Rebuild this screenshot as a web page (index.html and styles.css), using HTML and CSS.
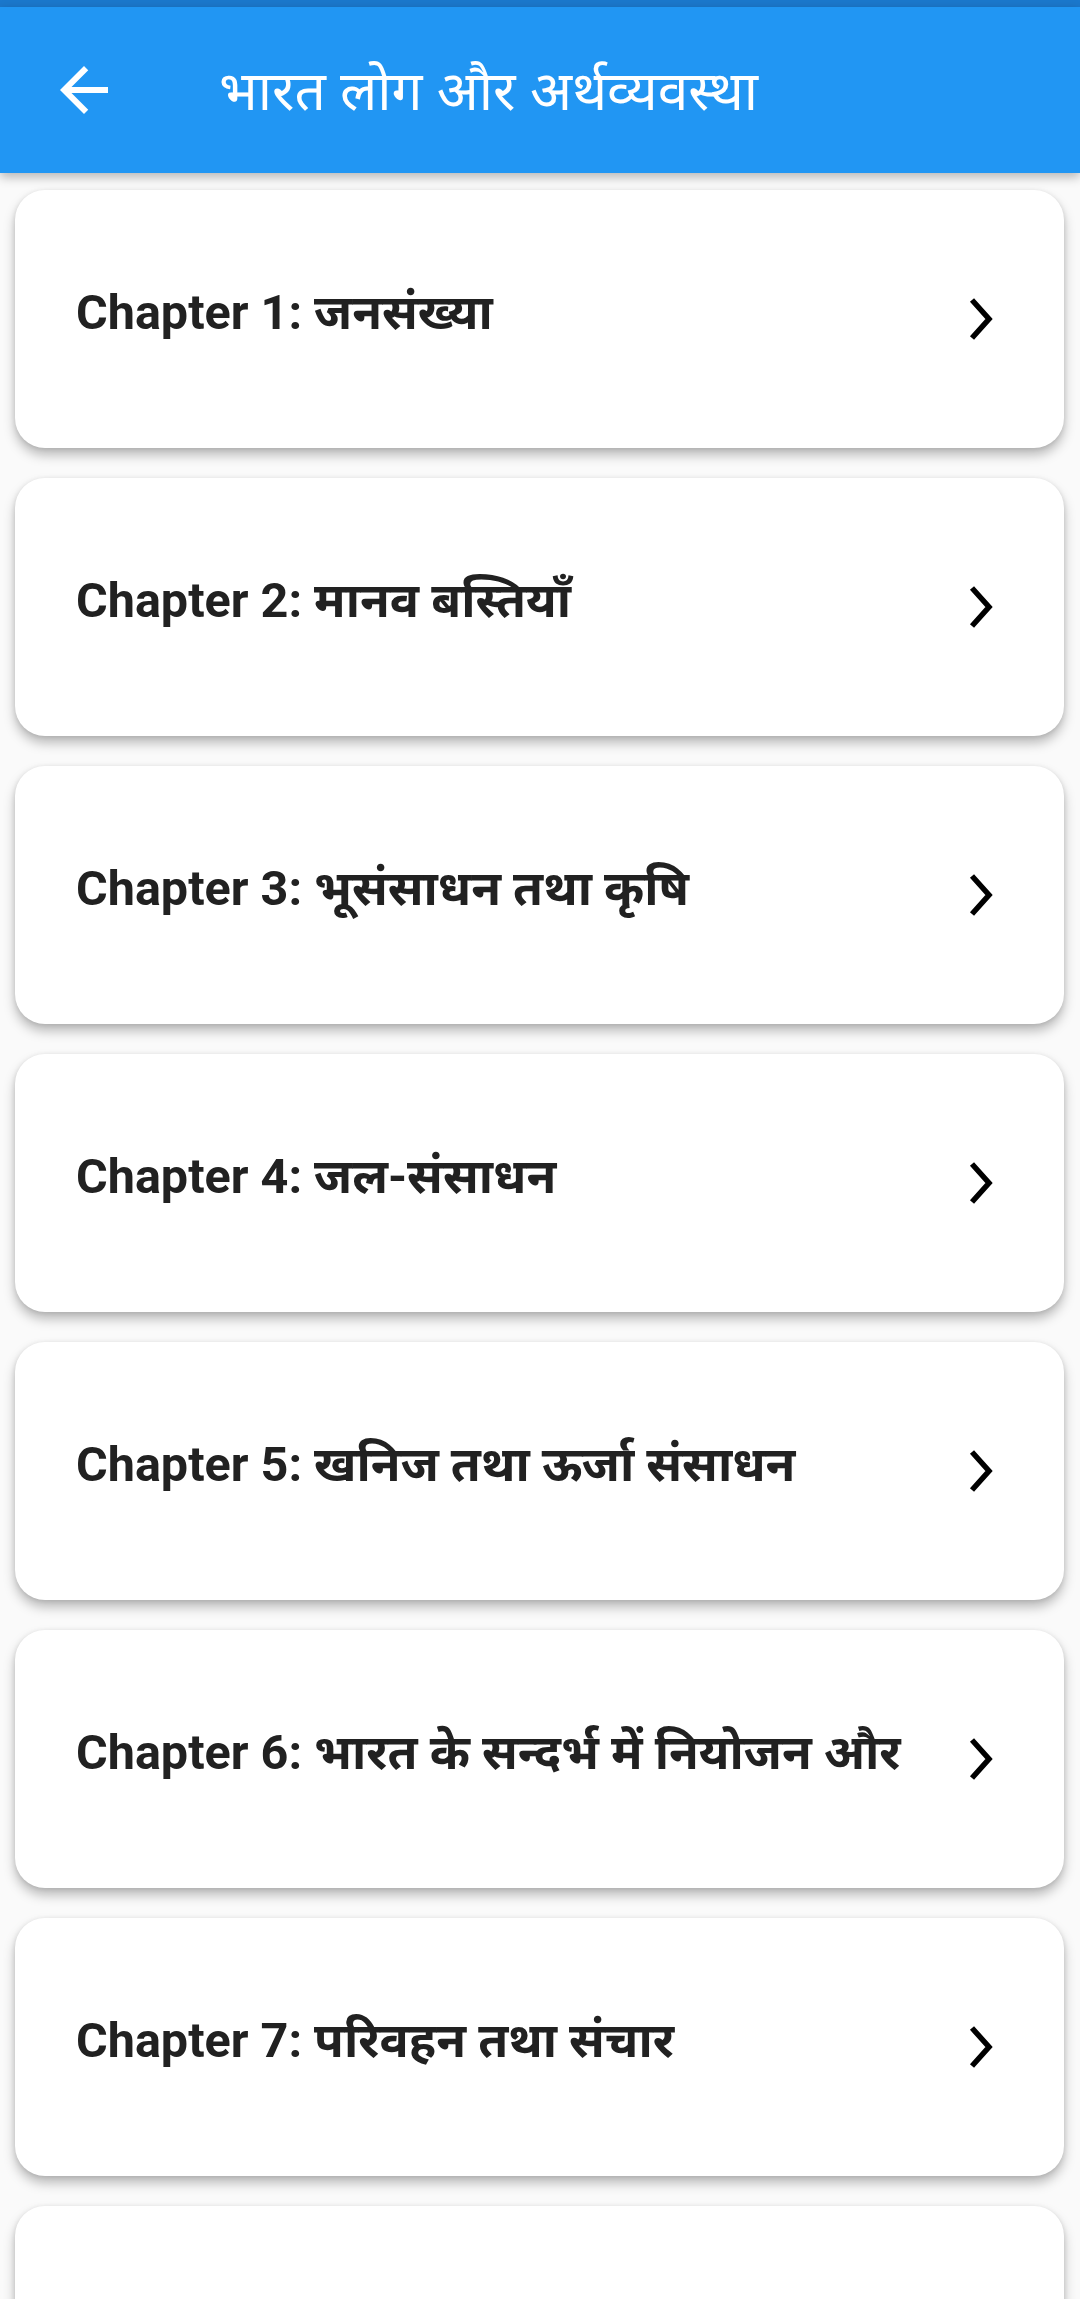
FILE: index.html
```html
<!DOCTYPE html>
<html lang="hi">
<head>
<meta charset="utf-8">
<title>भारत लोग और अर्थव्यवस्था</title>
<link rel="stylesheet" href="styles.css">
</head>
<body>
<div class="status"></div>
<header class="appbar">
  <div class="back">
    <svg viewBox="0 0 24 24" width="72" height="72"><path d="M20 11H7.83l5.59-5.59L12 4l-8 8 8 8 1.41-1.41L7.83 13H20v-2z" fill="#fff"/></svg>
  </div>
  <h1 class="title">भारत लोग और अर्थव्यवस्था</h1>
</header>
<main class="list">
  <div class="card"><span class="label">Chapter 1: जनसंख्या</span><svg class="chev" viewBox="0 0 30 44" width="30" height="44"><polyline points="5,3 22,22 5,41" fill="none" stroke="#000" stroke-width="5.5"/></svg></div>
  <div class="card"><span class="label">Chapter 2: मानव बस्तियाँ</span><svg class="chev" viewBox="0 0 30 44" width="30" height="44"><polyline points="5,3 22,22 5,41" fill="none" stroke="#000" stroke-width="5.5"/></svg></div>
  <div class="card"><span class="label">Chapter 3: भूसंसाधन तथा कृषि</span><svg class="chev" viewBox="0 0 30 44" width="30" height="44"><polyline points="5,3 22,22 5,41" fill="none" stroke="#000" stroke-width="5.5"/></svg></div>
  <div class="card"><span class="label">Chapter 4: जल-संसाधन</span><svg class="chev" viewBox="0 0 30 44" width="30" height="44"><polyline points="5,3 22,22 5,41" fill="none" stroke="#000" stroke-width="5.5"/></svg></div>
  <div class="card"><span class="label">Chapter 5: खनिज तथा ऊर्जा संसाधन</span><svg class="chev" viewBox="0 0 30 44" width="30" height="44"><polyline points="5,3 22,22 5,41" fill="none" stroke="#000" stroke-width="5.5"/></svg></div>
  <div class="card"><span class="label">Chapter 6: भारत के सन्दर्भ में नियोजन और</span><svg class="chev" viewBox="0 0 30 44" width="30" height="44"><polyline points="5,3 22,22 5,41" fill="none" stroke="#000" stroke-width="5.5"/></svg></div>
  <div class="card"><span class="label">Chapter 7: परिवहन तथा संचार</span><svg class="chev" viewBox="0 0 30 44" width="30" height="44"><polyline points="5,3 22,22 5,41" fill="none" stroke="#000" stroke-width="5.5"/></svg></div>
  <div class="card"><span class="label"></span></div>
</main>
</body>
</html>
```
FILE: styles.css
```css
html, body {
  margin: 0;
  padding: 0;
}
body {
  background: #fafafa;
  width: 1080px;
  height: 2299px;
  overflow: hidden;
  font-family: Roboto, "Noto Sans", "Noto Sans Devanagari", sans-serif;
}
.status {
  height: 7px;
  background: #1b78cc;
}
.appbar {
  position: relative;
  z-index: 2;
  height: 166px;
  background: #2196f3;
  display: flex;
  align-items: center;
  box-shadow: 0 4px 10px rgba(0, 0, 0, 0.28);
}
.back {
  width: 72px;
  height: 72px;
  margin-left: 48px;
  display: flex;
}
.title {
  margin: 0 0 4px 99px;
  color: #fff;
  font-family: "Noto Sans", "Noto Sans Devanagari", sans-serif;
  font-weight: 400;
  font-size: 55px;
  line-height: 1;
}
.list {
  padding: 17px 16px 0 15px;
  display: flex;
  flex-direction: column;
  gap: 30px;
}
.card {
  height: 258px;
  flex: none;
  background: #fff;
  border-radius: 30px;
  box-shadow: 0 7px 12px rgba(0, 0, 0, 0.26), 0 1px 5px rgba(0, 0, 0, 0.1);
  display: flex;
  align-items: center;
  justify-content: space-between;
  padding: 0 67px 0 61px;
}
.label {
  color: #212121;
  font-weight: 700;
  font-size: 48.5px;
  line-height: 1;
  padding-bottom: 12px;
}
.chev {
  flex: none;
}
```
